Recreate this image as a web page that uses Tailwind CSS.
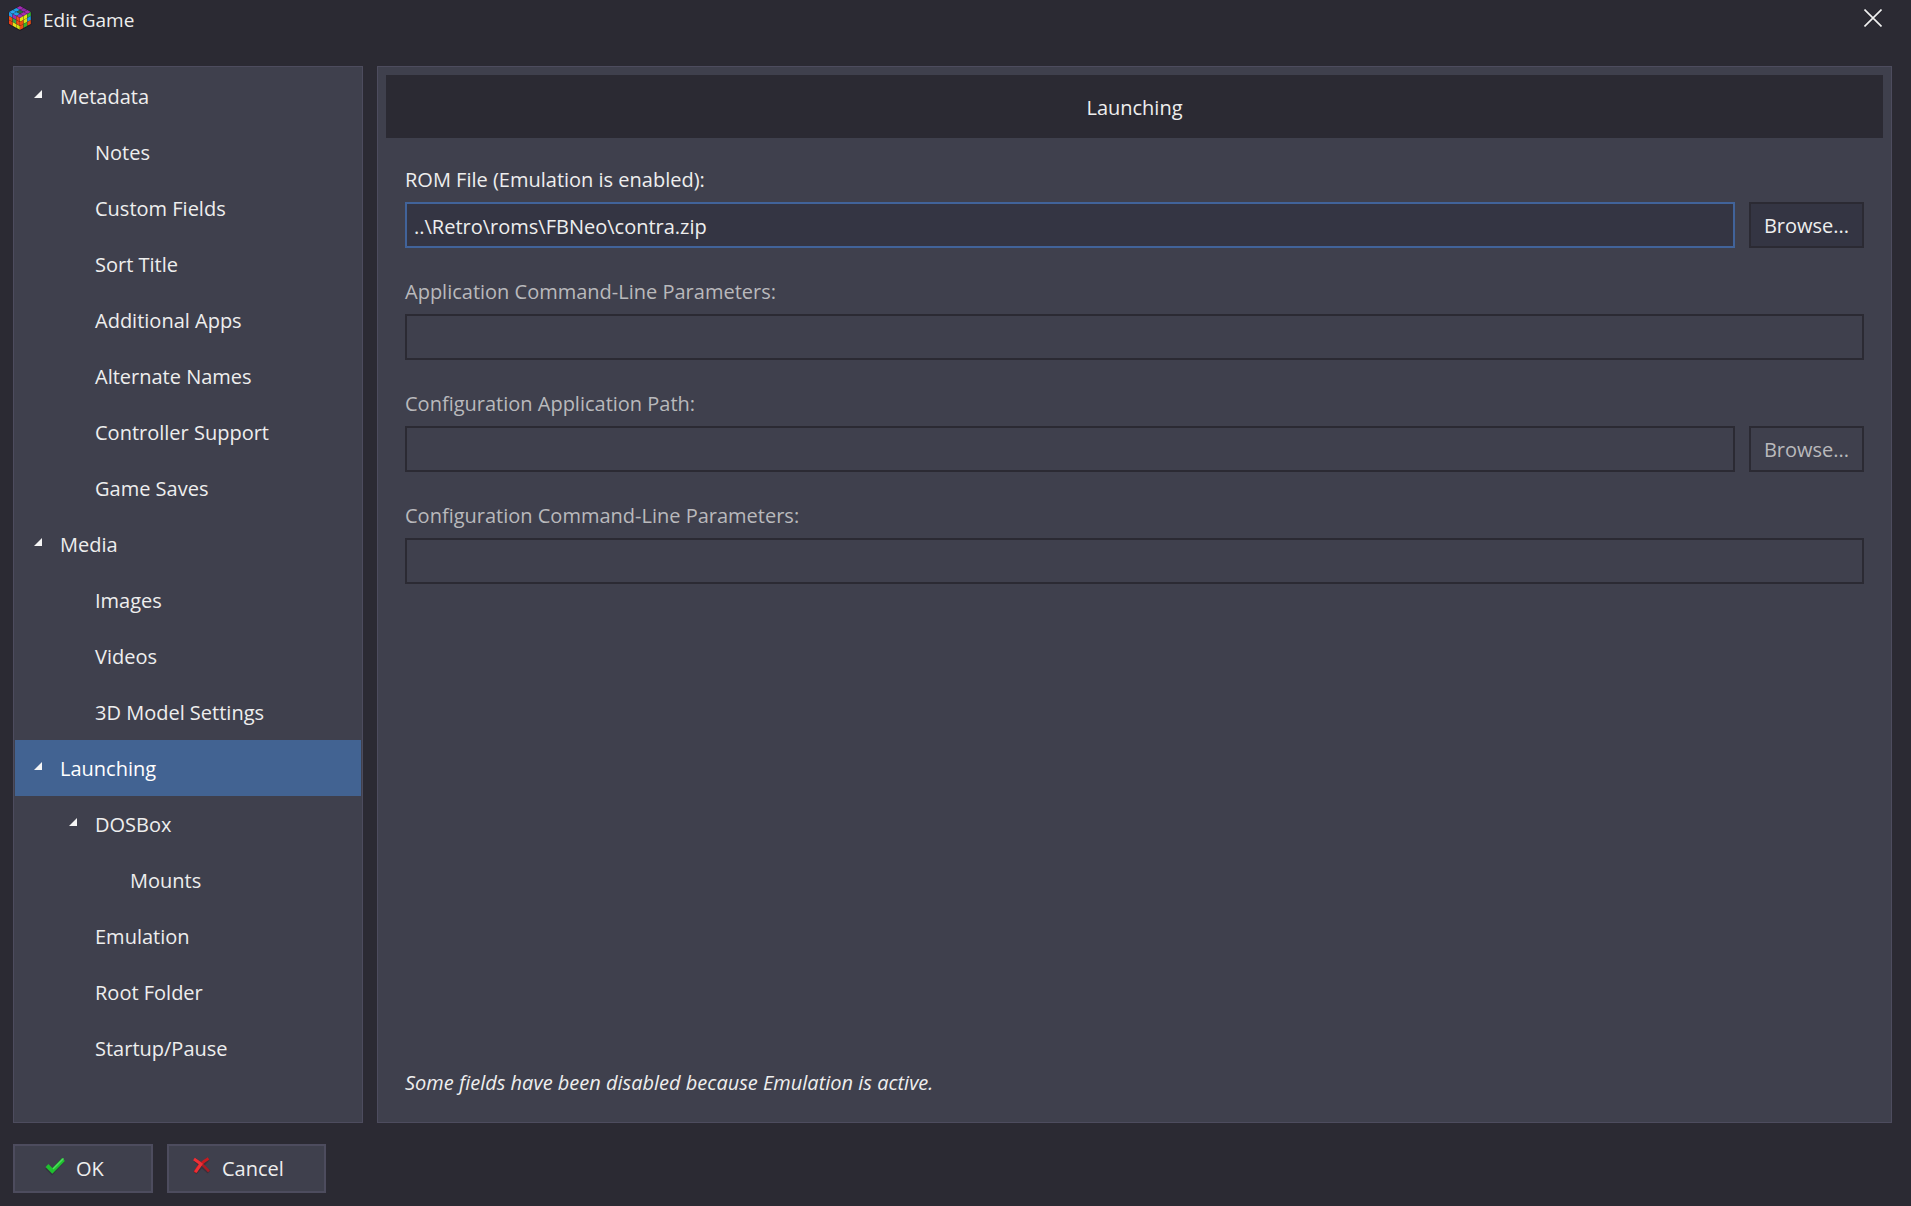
<!DOCTYPE html>
<html lang="en">
<head>
  <meta charset="UTF-8" />
  <meta name="viewport" content="width=device-width, initial-scale=1.0" />
  <title>Edit Game</title>
  <script src="https://cdn.jsdelivr.net/npm/@tailwindcss/browser@4"></script>
</head>
<body class="bg-[#2b2a33] min-h-screen flex flex-col font-['Open_Sans','Noto_Sans',sans-serif] text-[20px] leading-7 text-[#eeeeee]">

  <!-- Title bar -->
  <header class="h-[66px] flex items-start justify-between pl-2 pr-5">
    <div class="flex items-start gap-[11px] pt-1">
      <svg class="w-6 h-7" viewBox="0 0 24 28" aria-hidden="true">
        <path d="M12 1.500 23.500 8v12.500L12 27 .5 20.500V8z" fill="#1d1b24" />
        <!-- top face -->
        <g transform="matrix(3.667 2 -3.667 2 12 2)">
          <path d="M0 0h.94v.94H0z" fill="#a32bb0" />
          <path d="M1 0h.94v.94H1z" fill="#8d2aa5" />
          <path d="M2 0h.94v.94H2z" fill="#a52daf" />
          <path d="M0 1h.94v.94H0z" fill="#20a0ea" />
          <path d="M1 1h.94v.94H1z" fill="#2a6a45" />
          <path d="M2 1h.94v.94H2z" fill="#a32bb0" />
          <path d="M0 2h.94v.94H0z" fill="#2aa5ee" />
          <path d="M1 2h.94v.94H1z" fill="#20a0ea" />
          <path d="M2 2h.94v.94H2z" fill="#a32bb0" />
        </g>
        <!-- left face -->
        <g transform="matrix(3.667 2 0 4 1 8)">
          <path d="M0 0h.94v.94H0z" fill="#1f9be8" />
          <path d="M1 0h.94v.94H1z" fill="#9c2eb0" />
          <path d="M2 0h.94v.94H2z" fill="#f04c14" />
          <path d="M0 1h.94v.94H0z" fill="#f04c14" />
          <path d="M1 1h.94v.94H1z" fill="#35a845" />
          <path d="M2 1h.94v.94H2z" fill="#f04c14" />
          <path d="M0 2h.94v.94H0z" fill="#ef3f12" />
          <path d="M1 2h.94v.94H1z" fill="#e8df18" />
          <path d="M2 2h.94v.94H2z" fill="#d7df12" />
        </g>
        <!-- right face -->
        <g transform="matrix(3.667 -2 0 4 12 14)">
          <path d="M0 0h.94v.94H0z" fill="#e3e213" />
          <path d="M1 0h.94v.94H1z" fill="#e3e213" />
          <path d="M2 0h.94v.94H2z" fill="#37b72c" />
          <path d="M0 1h.94v.94H0z" fill="#ee4d12" />
          <path d="M1 1h.94v.94H1z" fill="#d7df12" />
          <path d="M2 1h.94v.94H2z" fill="#1f9be8" />
          <path d="M0 2h.94v.94H0z" fill="#ee4d12" />
          <path d="M1 2h.94v.94H1z" fill="#35b52b" />
          <path d="M2 2h.94v.94H2z" fill="#ee4d12" />
        </g>
      </svg>
      <h1 class="pt-0.5 text-[19px]">Edit Game</h1>
    </div>
    <button type="button" aria-label="Close" class="w-[36px] h-[36px] flex items-center justify-center">
      <svg class="w-[18px] h-[18px]" viewBox="0 0 18 18" fill="none" stroke="#f1f1f1" stroke-width="1.600" aria-hidden="true">
        <path d="m.5.5 17 17m0-17-17 17" />
      </svg>
    </button>
  </header>

  <main class="flex-1 flex gap-3.5 pl-[13px] pr-[19px]">

    <!-- Section tree -->
    <nav class="w-[350px] shrink-0 bg-[#3f404d] border border-[#4d4c5e] p-px pb-10" aria-label="Sections">
      <ul id="tree"></ul>
    </nav>

    <!-- Launching page -->
    <section class="flex-1 min-w-0 flex flex-col bg-[#3f404d] border border-[#4d4c5e] p-2">
      <h2 class="h-[63px] flex items-center justify-center bg-[#2b2a33] pt-0.5">Launching</h2>

      <form class="flex-1 flex flex-col px-[19px] pt-7">
        <div class="flex flex-col gap-[30px]">
          <div>
            <label for="romFile" class="block mb-2">ROM File (Emulation is enabled):</label>
            <div class="flex gap-3.5">
              <input id="romFile" type="text" value="..\Retro\roms\FBNeo\contra.zip" class="flex-1 min-w-0 h-[46px] px-[7px] pt-0.5 bg-[#343543] border-2 border-[#41639a] outline-none" />
              <button type="button" class="w-[115px] h-[46px] pt-0.5 bg-[#343543] border-2 border-[#2b2a33]">Browse...</button>
            </div>
          </div>

          <div>
            <label for="appParams" class="block mb-2 text-[#b9b9bc]">Application Command-Line Parameters:</label>
            <input id="appParams" type="text" disabled class="block w-full h-[46px] px-[7px] pt-0.5 border-2 border-[#2b2a33]" />
          </div>

          <div>
            <label for="configPath" class="block mb-2 text-[#b9b9bc]">Configuration Application Path:</label>
            <div class="flex gap-3.5">
              <input id="configPath" type="text" disabled class="flex-1 min-w-0 h-[46px] px-[7px] pt-0.5 border-2 border-[#2b2a33]" />
              <button type="button" disabled class="w-[115px] h-[46px] pt-0.5 border-2 border-[#2b2a33] text-[#b9b9bc]">Browse...</button>
            </div>
          </div>

          <div>
            <label for="configParams" class="block mb-2 text-[#b9b9bc]">Configuration Command-Line Parameters:</label>
            <input id="configParams" type="text" disabled class="block w-full h-[46px] px-[7px] pt-0.5 border-2 border-[#2b2a33]" />
          </div>
        </div>

        <p class="mt-auto mb-[17px] italic">Some fields have been disabled because Emulation is active.</p>
      </form>
    </section>
  </main>

  <!-- Dialog buttons -->
  <footer class="flex gap-3.5 pl-[13px] pt-[21px] pb-[13px]">
    <button type="button" class="w-[140px] h-[49px] pl-[30px] flex items-center gap-2.5 bg-[#3f404d] border-2 border-[#4d4c5e]">
      <svg class="w-[21px] h-[21px] mb-1" viewBox="0 0 21 21" fill="none" aria-hidden="true">
        <path d="m2 11 5 5L18 4" stroke="#252c30" stroke-width="5" opacity=".5" />
        <path d="M2 9.500 7.300 15 18.500 3.500" stroke="#1fc02f" stroke-width="4" />
        <path d="M8 13 18.500 2.500" stroke="#4fda5c" stroke-width="1.400" />
      </svg>
      OK
    </button>
    <button type="button" class="w-[159px] h-[49px] pl-[22px] flex items-center gap-2.5 bg-[#3f404d] border-2 border-[#4d4c5e]">
      <svg class="w-[21px] h-[21px] mb-1" viewBox="0 0 21 21" fill="none" aria-hidden="true">
        <path d="m4 4 14 12M17 3 4 17" stroke="#35242c" stroke-width="4" opacity=".5" />
        <path d="M17.500 2.500C11 6 7 10 4 16.500" stroke="#c81a20" stroke-width="3" />
        <path d="M3 3.500C9 5 13 10 18 15.500" stroke="#a51c24" stroke-width="2.600" />
        <path d="m3 3 7 5-5.500 8" stroke="#ee3036" stroke-width="3" />
      </svg>
      Cancel
    </button>
  </footer>

  <script>
    const sections = [
      { title: "Metadata", level: 0, open: true },
      { title: "Notes", level: 1 },
      { title: "Custom Fields", level: 1 },
      { title: "Sort Title", level: 1 },
      { title: "Additional Apps", level: 1 },
      { title: "Alternate Names", level: 1 },
      { title: "Controller Support", level: 1 },
      { title: "Game Saves", level: 1 },
      { title: "Media", level: 0, open: true },
      { title: "Images", level: 1 },
      { title: "Videos", level: 1 },
      { title: "3D Model Settings", level: 1 },
      { title: "Launching", level: 0, open: true, selected: true },
      { title: "DOSBox", level: 1, open: true },
      { title: "Mounts", level: 2 },
      { title: "Emulation", level: 1 },
      { title: "Root Folder", level: 1 },
      { title: "Startup/Pause", level: 1 }
    ];

    // Each level is indented by 35px
    document.getElementById("tree").innerHTML = sections.map(item => `
      <li>
        <button type="button" class="w-full h-[56px] flex items-center text-left ${item.selected ? "bg-[#426392] text-white" : ""}" style="padding-left: ${19 + item.level * 35}px">
          <svg class="w-2 h-2 mr-[18px] mb-1 shrink-0" viewBox="0 0 8 8" aria-hidden="true">${item.open ? '<path d="M8 0v8H0z" fill="#f5f5f5" />' : ""}</svg>
          <span class="pt-0.5">${item.title}</span>
        </button>
      </li>`).join("");
  </script>

</body>
</html>
